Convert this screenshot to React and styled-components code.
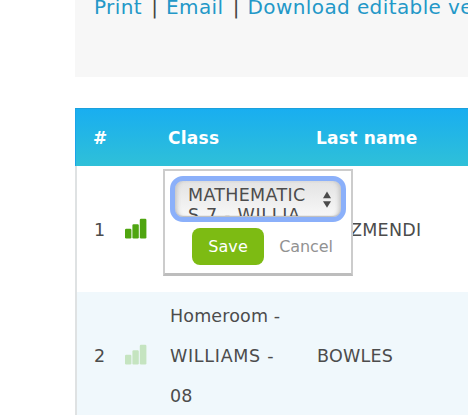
import React, { useState } from "react";
import styled, { createGlobalStyle } from "styled-components";

const students = [
    { id: 1, classLines: [], lastName: "ZMENDI", active: true, editing: true },
    { id: 2, classLines: ["Homeroom -", "WILLIAMS -", "08"], lastName: "BOWLES", active: false, editing: false },
];

const lineSpacing = { "Homeroom -": 0.15, "WILLIAMS -": 0.7 };

const SignalIcon = ({ active }) => (
    <Signal viewBox="0 0 23 22" fill={active ? "#4fa510" : "#c5e4c0"}>
        <rect x="0" y="10.8" width="6.4" height="9.6" rx="1.2" />
        <rect x="7.4" y="6.3" width="6.4" height="14.1" rx="1.2" />
        <rect x="14.8" y="0.8" width="6.6" height="19.6" rx="1.2" />
    </Signal>
);

const ClassEditor = ({ onClose }) => (
    <Editor>
        <SelectBox>
            <SelectText>
                <Text $spacing={0.3}>MATHEMATIC</Text>
                <Text $spacing={0.7}>S 7 - WILLIA</Text>
            </SelectText>
            <Arrows viewBox="0 0 8 18" fill="#4b4b4b">
                <path d="M4 0.5L8 7.3H0Z" />
                <path d="M0 10.2H8L4 16.8Z" />
            </Arrows>
        </SelectBox>
        <Actions>
            <SaveButton onClick={onClose}>Save</SaveButton>
            <CancelButton onClick={onClose}>Cancel</CancelButton>
        </Actions>
    </Editor>
);

const App = () => {
    const [editing, setEditing] = useState(true);

    return (
        <Page>
            <GlobalStyle />
            <Toolbar>
                <ToolLink>Print</ToolLink>
                <Divider>|</Divider>
                <ToolLink>Email</ToolLink>
                <Divider>|</Divider>
                <ToolLink>Download editable version</ToolLink>
            </Toolbar>
            <Table>
                <HeaderRow>
                    <HeaderCell $indent={17}>#</HeaderCell>
                    <HeaderCell />
                    <HeaderCell>Class</HeaderCell>
                    <HeaderCell>Last name</HeaderCell>
                </HeaderRow>
                {students.map((v) => (
                    <Row key={v.id} $even={v.id % 2 === 0}>
                        <NumberCell>{v.id}</NumberCell>
                        <IconCell><SignalIcon active={v.active} /></IconCell>
                        <ClassCell>
                            {v.classLines.map((line) => <Text key={line} $spacing={lineSpacing[line]}>{line}</Text>)}
                            {v.editing && editing && <ClassEditor onClose={() => setEditing(false)} />}
                        </ClassCell>
                        <NameCell $indent={v.editing ? 33 : 0}>{v.lastName}</NameCell>
                    </Row>
                ))}
            </Table>
        </Page>
    );
};

const GlobalStyle = createGlobalStyle`
    * {
        box-sizing: border-box;
    }
    body {
        margin: 0;
        background: #fff;
        overflow: hidden;
    }
`;

const Page = styled.div`
    width: 468px;
    height: 415px;
    padding-left: 75px;
    overflow: hidden;
    font-family: Verdana, "DejaVu Sans", sans-serif;
    font-size: 17.5px;
    color: #4c4c4c;
`;

const Toolbar = styled.div`
    display: flex;
    height: 77px;
    padding-left: 19px;
    background: #f7f7f7;
    font-size: 20px;
    line-height: 14px;
    white-space: pre;
`;

const ToolLink = styled.a`
    flex: none;
    color: #2398c8;
    letter-spacing: 0.4px;
    cursor: pointer;
`;

const Divider = styled.span`
    flex: none;
    width: 24px;
    padding-left: 1px;
    text-align: center;
    color: #444;
`;

const Table = styled.div`
    margin-top: 31px;
`;

const Row = styled.div`
    display: grid;
    grid-template-columns: 48px 44px 148px 1fr;
    align-items: center;
    height: 126px;
    border-left: 2px solid #dfe2e3;
    background: ${(props) => (props.$even ? "#f0f8fc" : "#fff")};
`;

const HeaderRow = styled(Row)`
    height: 58px;
    border-left: 1px solid #1ba4e8;
    border-top: 1px solid #1ba0dc;
    background: linear-gradient(#19aef0, #2fc0d8);
`;

const HeaderCell = styled.div`
    padding-left: ${(props) => props.$indent || 0}px;
    color: #fff;
    font-size: 17px;
    font-weight: bold;
    letter-spacing: 0.25px;
    white-space: nowrap;
`;

const NumberCell = styled.div`
    padding: 2px 0 0 17px;
`;

const IconCell = styled.div`
    display: flex;
`;

const Signal = styled.svg`
    width: 23px;
    height: 22px;
    margin-top: -1px;
`;

const ClassCell = styled.div`
    position: relative;
    align-self: stretch;
    padding: 4px 0 0 1px;
    line-height: 40px;
`;

const NameCell = styled.div`
    padding: 2px 0 0 ${(props) => props.$indent}px;
    letter-spacing: 0.25px;
    white-space: nowrap;
`;

const Text = styled.div`
    letter-spacing: ${(props) => props.$spacing || 0}px;
    white-space: nowrap;
`;

const Editor = styled.div`
    position: absolute;
    top: 3px;
    left: -6px;
    width: 190px;
    height: 107px;
    padding: 5px 5px 0;
    border: 2px solid #ccc;
    border-bottom: 3px solid #bdbdbd;
    background: #fff;
    line-height: 20px;
`;

const SelectBox = styled.div`
    display: flex;
    align-items: center;
    justify-content: space-between;
    height: 46px;
    padding: 0 10px 0 13px;
    border: 5px solid #8bb0fa;
    border-radius: 13px;
    background: linear-gradient(#e3e3e3, #f8f8f8);
    box-shadow: inset 4px 0 4px -2px #c4c4c4, inset -4px 0 4px -2px #c4c4c4, inset 0 -1px 1px #bbb;
`;

const SelectText = styled.div`
    height: 34px;
    padding-top: 3px;
    overflow: hidden;
`;

const Arrows = styled.svg`
    width: 8px;
    height: 18px;
    margin-top: 2px;
`;

const Actions = styled.div`
    display: flex;
    align-items: center;
    margin-top: 6px;
    padding-left: 22px;
`;

const SaveButton = styled.button`
    width: 72px;
    height: 37px;
    padding: 0;
    border: none;
    border-radius: 8px;
    background: #7dbb13;
    color: #fff;
    font: 16px Verdana, "DejaVu Sans", sans-serif;
    letter-spacing: 0.1px;
    cursor: pointer;
`;

const CancelButton = styled(SaveButton)`
    width: 54px;
    margin-left: 15px;
    background: none;
    color: #929292;
    letter-spacing: -0.1px;
`;

export default App;
